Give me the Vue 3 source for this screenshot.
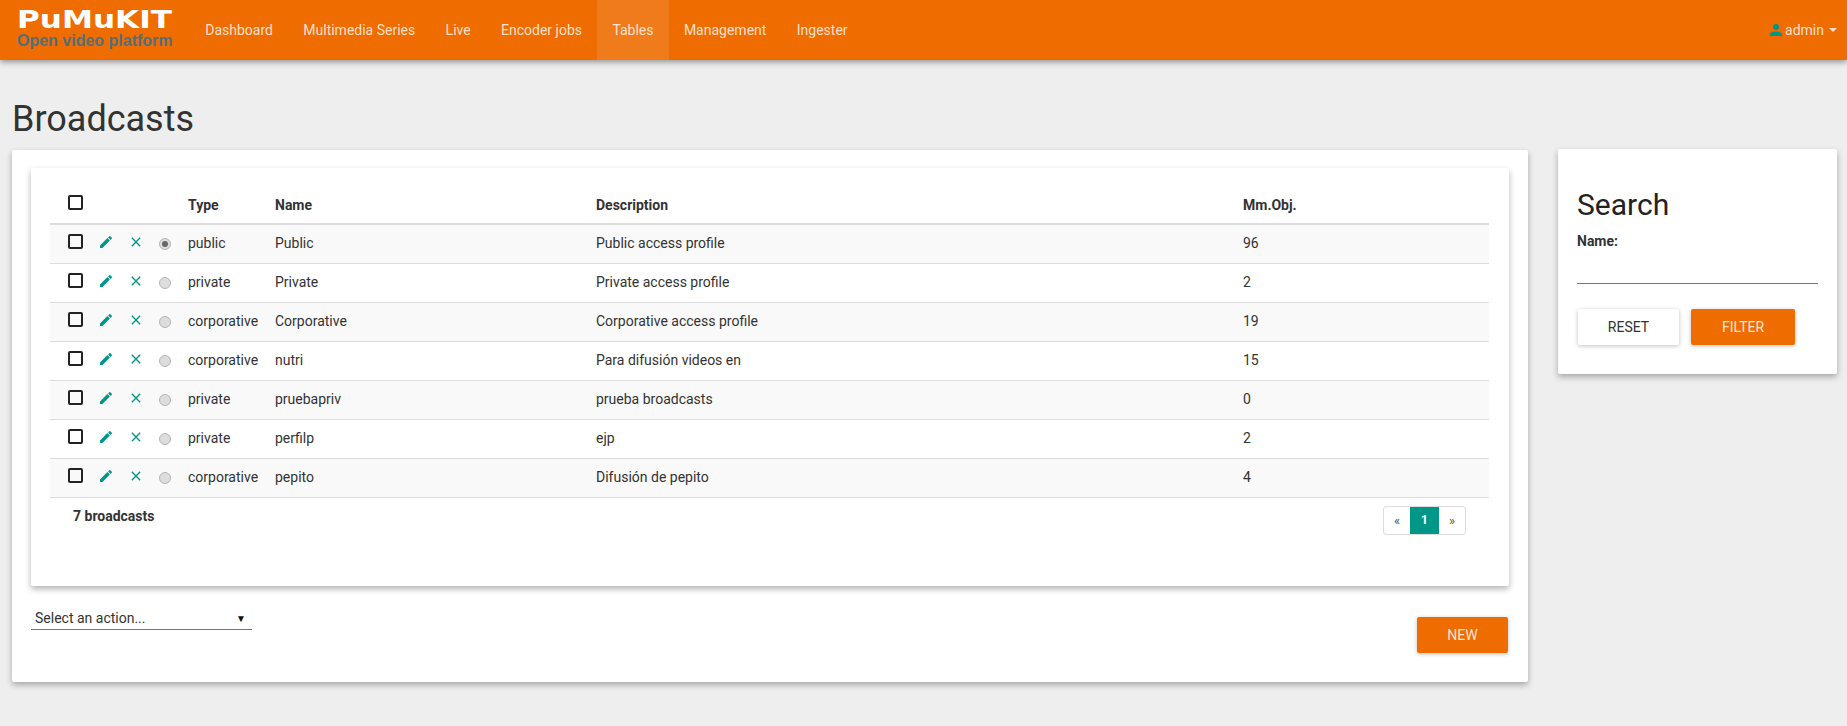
<template>
  <div class="page">
    <nav class="navbar">
      <a class="brand" href="#">
        <span class="logo">PuMuKIT</span>
        <span class="tagline">Open video platform</span>
      </a>
      <ul class="nav-links">
        <li v-for="item in navItems" :key="item" :class="{ active: item === 'Tables' }">{{ item }}</li>
      </ul>
      <div class="user">
        <svg width="18" height="18" viewBox="0 0 24 24"><path :d="icons.account" fill="#009688" /></svg>
        <span>admin</span>
        <span class="caret"></span>
      </div>
    </nav>

    <h1 class="title">Broadcasts</h1>

    <div class="content">
      <section class="card main-card">
        <div class="card inner-card">
          <table class="data-table">
            <colgroup>
              <col style="width: 42px" />
              <col style="width: 30px" />
              <col style="width: 28px" />
              <col style="width: 30px" />
              <col style="width: 87px" />
              <col style="width: 321px" />
              <col style="width: 647px" />
              <col />
            </colgroup>
            <thead>
              <tr>
                <th class="check-cell"><span class="checkbox"></span></th>
                <th></th>
                <th></th>
                <th></th>
                <th>Type</th>
                <th>Name</th>
                <th>Description</th>
                <th>Mm.Obj.</th>
              </tr>
            </thead>
            <tbody>
              <tr v-for="row in rows" :key="row.name">
                <td class="check-cell"><span class="checkbox"></span></td>
                <td class="icon-cell pencil-cell">
                  <svg width="16" height="16" viewBox="0 0 24 24"><path :d="icons.pencil" fill="#009688" /></svg>
                </td>
                <td class="icon-cell close-cell">
                  <svg width="16" height="16" viewBox="0 0 24 24"><path :d="icons.close" fill="#009688" /></svg>
                </td>
                <td class="radio-cell"><span class="radio" :class="{ on: row.selected }"></span></td>
                <td>{{ row.type }}</td>
                <td>{{ row.name }}</td>
                <td>{{ row.description }}</td>
                <td>{{ row.count }}</td>
              </tr>
            </tbody>
          </table>
          <div class="table-footer">
            <strong>7 broadcasts</strong>
            <div class="pagination">
              <span class="page-link">«</span>
              <span class="page-link current">1</span>
              <span class="page-link">»</span>
            </div>
          </div>
        </div>

        <div class="actions">
          <div class="select">
            <span>Select an action...</span>
            <span class="select-arrow">▼</span>
          </div>
          <button class="btn btn-primary new-btn">NEW</button>
        </div>
      </section>

      <aside class="card side-card">
        <h2>Search</h2>
        <label>Name:</label>
        <div class="text-input"></div>
        <div class="side-buttons">
          <button class="btn reset-btn">RESET</button>
          <button class="btn btn-primary filter-btn">FILTER</button>
        </div>
      </aside>
    </div>
  </div>
</template>

<script setup>
const navItems = ['Dashboard', 'Multimedia Series', 'Live', 'Encoder jobs', 'Tables', 'Management', 'Ingester'];

const icons = {
  pencil: 'M20.71,7.04C21.1,6.65 21.1,6 20.71,5.63L18.37,3.29C18,2.9 17.35,2.9 16.96,3.29L15.12,5.12L18.87,8.87M3,17.25V21H6.75L17.81,9.93L14.06,6.18L3,17.25Z',
  close: 'M19,6.41L17.59,5L12,10.59L6.41,5L5,6.41L10.59,12L5,17.59L6.41,19L12,13.41L17.59,19L19,17.59L13.41,12L19,6.41Z',
  account: 'M12,4A4,4 0 0,1 16,8A4,4 0 0,1 12,12A4,4 0 0,1 8,8A4,4 0 0,1 12,4M12,14C16.42,14 20,15.79 20,18V20H4V18C4,15.79 7.58,14 12,14Z'
};

const rows = [
  { type: 'public', name: 'Public', description: 'Public access profile', count: 96, selected: true },
  { type: 'private', name: 'Private', description: 'Private access profile', count: 2 },
  { type: 'corporative', name: 'Corporative', description: 'Corporative access profile', count: 19 },
  { type: 'corporative', name: 'nutri', description: 'Para difusión videos en', count: 15 },
  { type: 'private', name: 'pruebapriv', description: 'prueba broadcasts', count: 0 },
  { type: 'private', name: 'perfilp', description: 'ejp', count: 2 },
  { type: 'corporative', name: 'pepito', description: 'Difusión de pepito', count: 4 }
];
</script>

<style>
html, body {
  margin: 0;
  background: #eeeeee;
}
</style>

<style scoped>
.page {
  font-family: Roboto, "Liberation Sans", sans-serif;
  font-size: 14px;
  color: #333;
  height: 726px;
  overflow: hidden;
  background: #eee;
}

.navbar {
  display: flex;
  align-items: stretch;
  height: 60px;
  background: #ef6c00;
  box-shadow: 0 2px 6px rgba(0, 0, 0, 0.4);
  padding: 0 10px 0 17px;
}
.brand {
  display: flex;
  flex-direction: column;
  width: 173px;
  padding-top: 8px;
  text-decoration: none;
}
.logo {
  display: block;
  width: 120px;
  font-family: "DejaVu Sans", sans-serif;
  font-weight: 700;
  font-size: 24px;
  line-height: 24px;
  color: #fff;
  white-space: nowrap;
  transform: scaleX(1.297);
  transform-origin: left center;
}
.tagline {
  font-family: "Liberation Sans", Arial, sans-serif;
  font-weight: 700;
  font-size: 16px;
  line-height: 18px;
  color: #546e7a;
  white-space: nowrap;
}
.nav-links {
  display: flex;
  list-style: none;
  margin: 0;
  padding: 0;
}
.nav-links li {
  padding: 0 15.2px;
  line-height: 60px;
  color: rgba(255, 255, 255, 0.8);
}
.nav-links li.active {
  background: rgba(255, 255, 255, 0.1);
}
.user {
  display: flex;
  align-items: center;
  margin-left: auto;
  color: rgba(255, 255, 255, 0.8);
}
.caret {
  width: 0;
  height: 0;
  margin-left: 5px;
  border-left: 4px solid transparent;
  border-right: 4px solid transparent;
  border-top: 4px solid rgba(255, 255, 255, 0.8);
}

.title {
  margin: 0;
  padding: 38px 0 0 12px;
  height: 52px;
  font-size: 36px;
  font-weight: 400;
  line-height: 42px;
  color: #333;
}

.content {
  display: flex;
  align-items: flex-start;
  gap: 30px;
  padding-left: 12px;
}

.card {
  background: #fff;
  border-radius: 2px;
  box-shadow: 0 3px 6px rgba(0, 0, 0, 0.3);
}
.main-card {
  width: 1516px;
  height: 532px;
  padding: 18px 19px 0;
  box-sizing: border-box;
}
.inner-card {
  height: 418px;
  padding: 20px 20px 0 19px;
  box-sizing: border-box;
}

.data-table {
  width: 100%;
  table-layout: fixed;
  border-collapse: collapse;
  border-bottom: 1px solid #ddd;
}
.data-table th {
  height: 33px;
  padding: 0 8px 2px;
  text-align: left;
  font-weight: 700;
  vertical-align: middle;
  border-bottom: 2px solid #ddd;
}
.data-table td {
  height: 36px;
  padding: 0 8px 2px;
  vertical-align: middle;
  border-top: 1px solid #ddd;
}
.data-table tbody tr:first-child td {
  border-top: none;
}
.data-table tbody tr:nth-child(odd) {
  background: #f9f9f9;
}
.data-table .check-cell {
  padding-left: 18px;
  padding-right: 0;
}
.checkbox {
  display: block;
  width: 11px;
  height: 11px;
  margin-top: -4px;
  border: 2px solid #222;
  border-radius: 2px;
}
.icon-cell svg {
  display: block;
  margin-top: -3px;
}
.pencil-cell svg {
  margin-left: -2px;
}
.close-cell svg {
  margin-left: -2px;
}
.data-table .radio-cell {
  padding-left: 9px;
  padding-right: 0;
}
.radio {
  display: flex;
  align-items: center;
  justify-content: center;
  width: 10px;
  height: 10px;
  margin-top: 2px;
  border: 1px solid #b5b5b5;
  border-radius: 50%;
  background: #ddd;
}
.radio.on::after {
  content: "";
  width: 6px;
  height: 6px;
  border-radius: 50%;
  background: #666;
}

.table-footer {
  display: flex;
  justify-content: space-between;
  align-items: flex-start;
  padding: 8px 23px 0 23px;
}
.table-footer strong {
  line-height: 20px;
}
.pagination {
  display: flex;
  border: 1px solid #ddd;
  border-radius: 3px;
  height: 27px;
  font-size: 13px;
}
.page-link {
  width: 26px;
  line-height: 27px;
  text-align: center;
  color: #555;
}
.page-link.current {
  width: 29px;
  background: #009688;
  color: #fff;
  font-weight: 700;
  font-size: 12px;
}

.actions {
  display: flex;
  justify-content: space-between;
  align-items: flex-start;
  padding: 21px 1px 0 0;
}
.select {
  display: flex;
  justify-content: space-between;
  align-items: center;
  width: 221px;
  height: 23px;
  padding: 0 6px 0 4px;
  box-sizing: border-box;
  border-bottom: 1px solid #757575;
}
.select-arrow {
  font-size: 10px;
  color: #111;
}

.btn {
  display: block;
  height: 36px;
  border: none;
  border-radius: 2px;
  font-family: inherit;
  font-size: 14px;
  background: #fff;
  color: #333;
  box-shadow: 0 1px 4px rgba(0, 0, 0, 0.25);
}
.btn-primary {
  background: #ef6c00;
  color: rgba(255, 255, 255, 0.85);
}
.new-btn {
  width: 91px;
  margin-top: 10px;
}

.side-card {
  width: 279px;
  height: 225px;
  margin-top: -1px;
  padding: 38px 19px 0;
  box-sizing: border-box;
}
.side-card h2 {
  margin: 0;
  font-size: 30px;
  font-weight: 400;
  line-height: 36px;
  color: #222;
}
.side-card label {
  display: block;
  margin-top: 8px;
  font-weight: 700;
  line-height: 20px;
}
.text-input {
  height: 32px;
  width: 241px;
  border-bottom: 1px solid #757575;
}
.side-buttons {
  display: flex;
  gap: 12px;
  margin-top: 25px;
  padding-left: 1px;
}
.reset-btn {
  width: 101px;
}
.filter-btn {
  width: 104px;
}
</style>
